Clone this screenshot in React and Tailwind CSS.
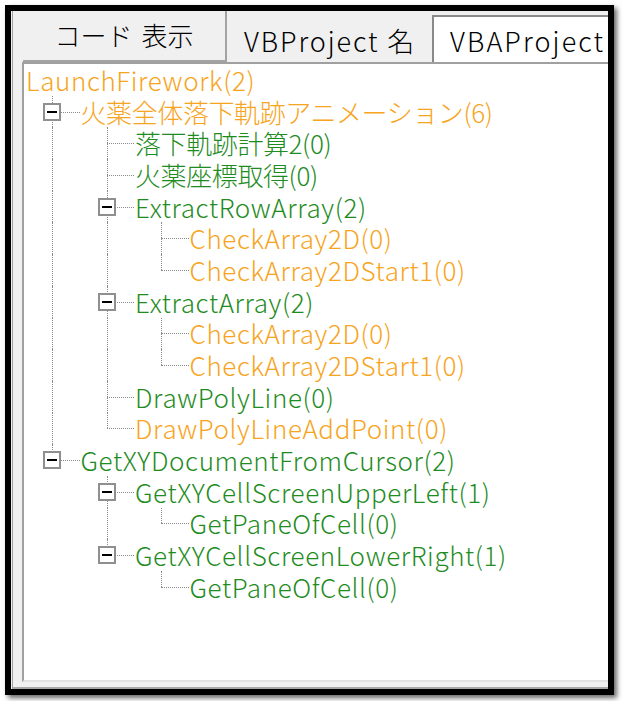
import React from "react";

const tree = {
  label: "LaunchFirework(2)", c: "o", children: [
    { label: "火薬全体落下軌跡アニメーション(6)", c: "o", children: [
      { label: "落下軌跡計算2(0)", c: "g" },
      { label: "火薬座標取得(0)", c: "g" },
      { label: "ExtractRowArray(2)", c: "g", children: [
        { label: "CheckArray2D(0)", c: "o" },
        { label: "CheckArray2DStart1(0)", c: "o" },
      ] },
      { label: "ExtractArray(2)", c: "g", children: [
        { label: "CheckArray2D(0)", c: "o" },
        { label: "CheckArray2DStart1(0)", c: "o" },
      ] },
      { label: "DrawPolyLine(0)", c: "g" },
      { label: "DrawPolyLineAddPoint(0)", c: "o" },
    ] },
    { label: "GetXYDocumentFromCursor(2)", c: "g", children: [
      { label: "GetXYCellScreenUpperLeft(1)", c: "g", children: [
        { label: "GetPaneOfCell(0)", c: "g" },
      ] },
      { label: "GetXYCellScreenLowerRight(1)", c: "g", children: [
        { label: "GetPaneOfCell(0)", c: "g" },
      ] },
    ] },
  ],
};

function flatten(node, depth, guides, isLast, out) {
  out.push({ node, depth, guides, isLast });
  const kids = node.children || [];
  kids.forEach((k, i) => {
    const nextGuides = depth >= 1 ? [...guides, !isLast] : guides;
    flatten(k, depth + 1, nextGuides, i === kids.length - 1, out);
  });
  return out;
}

const rows = flatten(tree, 0, [], true, []);
const hasCJK = (s) => /[\u3000-\u9fff]/.test(s);

function Guide({ on }) {
  return (
    <div className="relative w-[54.5px] h-full shrink-0">
      {on && <div className="absolute left-[26px] top-0 bottom-0 border-l border-dotted border-[#8a8a8a]" />}
    </div>
  );
}

function Connector({ isLast, hasKids }) {
  return (
    <div className="relative w-[54.5px] h-full shrink-0">
      <div
        className={
          "absolute left-[26px] top-0 border-l border-dotted border-[#8a8a8a] " +
          (isLast ? "h-1/2" : "bottom-0")
        }
      />
      <div className="absolute left-[26px] right-[1px] top-1/2 border-t border-dotted border-[#8a8a8a]" />
      {hasKids && (
        <div className="absolute left-[17px] top-1/2 -mt-[9px] w-[18px] h-[18px] bg-white border-2 border-[#8f8f8f] flex items-center justify-center">
          <div className="w-[10px] h-[2px] bg-black" />
        </div>
      )}
    </div>
  );
}

export default function App() {
  return (
    <div className="w-[624px] h-[701px] bg-white p-[5px]" style={{ fontFamily: '"Noto Sans CJK JP", "Noto Sans", sans-serif' }}>
      <div className="w-[609px] h-[690px] border-[6px] border-black bg-[#f0f0f0] shadow-[3px_3px_5px_rgba(0,0,0,0.6)] overflow-hidden">
        <div className="h-full ml-[1px] border-l border-[#a0a0a0] flex flex-col">
          {/* top bar */}
          <div className="h-[51px] flex shrink-0">
            <div className="ml-[10px] w-[204px] shrink-0 h-full border-r-2 border-b-2 border-[#a3a3a3] bg-[#f0f0f0] flex items-center justify-center pb-[2px] text-[26px] font-light text-black leading-none">
              <span>コード</span><span className="ml-[9px]">表示</span>
            </div>
            <div className="ml-[17px] w-[172px] shrink-0 pt-[8px] flex items-center text-[27px] font-light text-black tracking-[1.9px] leading-none whitespace-nowrap">
              VBProject 名
            </div>
            <div className="ml-[16px] mt-[4px] flex-1 h-[47px] bg-white border-t-2 border-l-2 border-[#8a8a8a] flex items-center pl-[16px] pt-[2px] text-[27px] font-light text-black tracking-[2.1px] leading-none whitespace-nowrap overflow-hidden">
              VBAProject
            </div>
          </div>
          {/* tree */}
          <div className="ml-[9px] flex-1 bg-white border-t-2 border-l-2 border-[#a0a0a0] border-b-2 border-b-[#e2e2e2] pl-[2px] overflow-hidden">
            {rows.map((r, i) => (
              <div key={i} className="h-[31.7px] flex items-stretch">
                {r.depth >= 1 && r.guides.map((g, j) => <Guide key={j} on={g} />)}
                {r.depth >= 1 && <Connector isLast={r.isLast} hasKids={!!(r.node.children && r.node.children.length)} />}
                <div
                  className={
                    "flex items-center whitespace-nowrap text-[26px] font-light leading-none " +
                    (hasCJK(r.node.label) ? "tracking-[-0.4px] " : "tracking-[0.6px] ") +
                    (r.node.c === "o" ? "text-[#f7a420]" : "text-[#1f8c1f]")
                  }
                >
                  {r.node.label}
                </div>
              </div>
            ))}
          </div>
          <div className="h-[7px] shrink-0 border-b-2 border-[#a8a8a8]" />
        </div>
      </div>
    </div>
  );
}
